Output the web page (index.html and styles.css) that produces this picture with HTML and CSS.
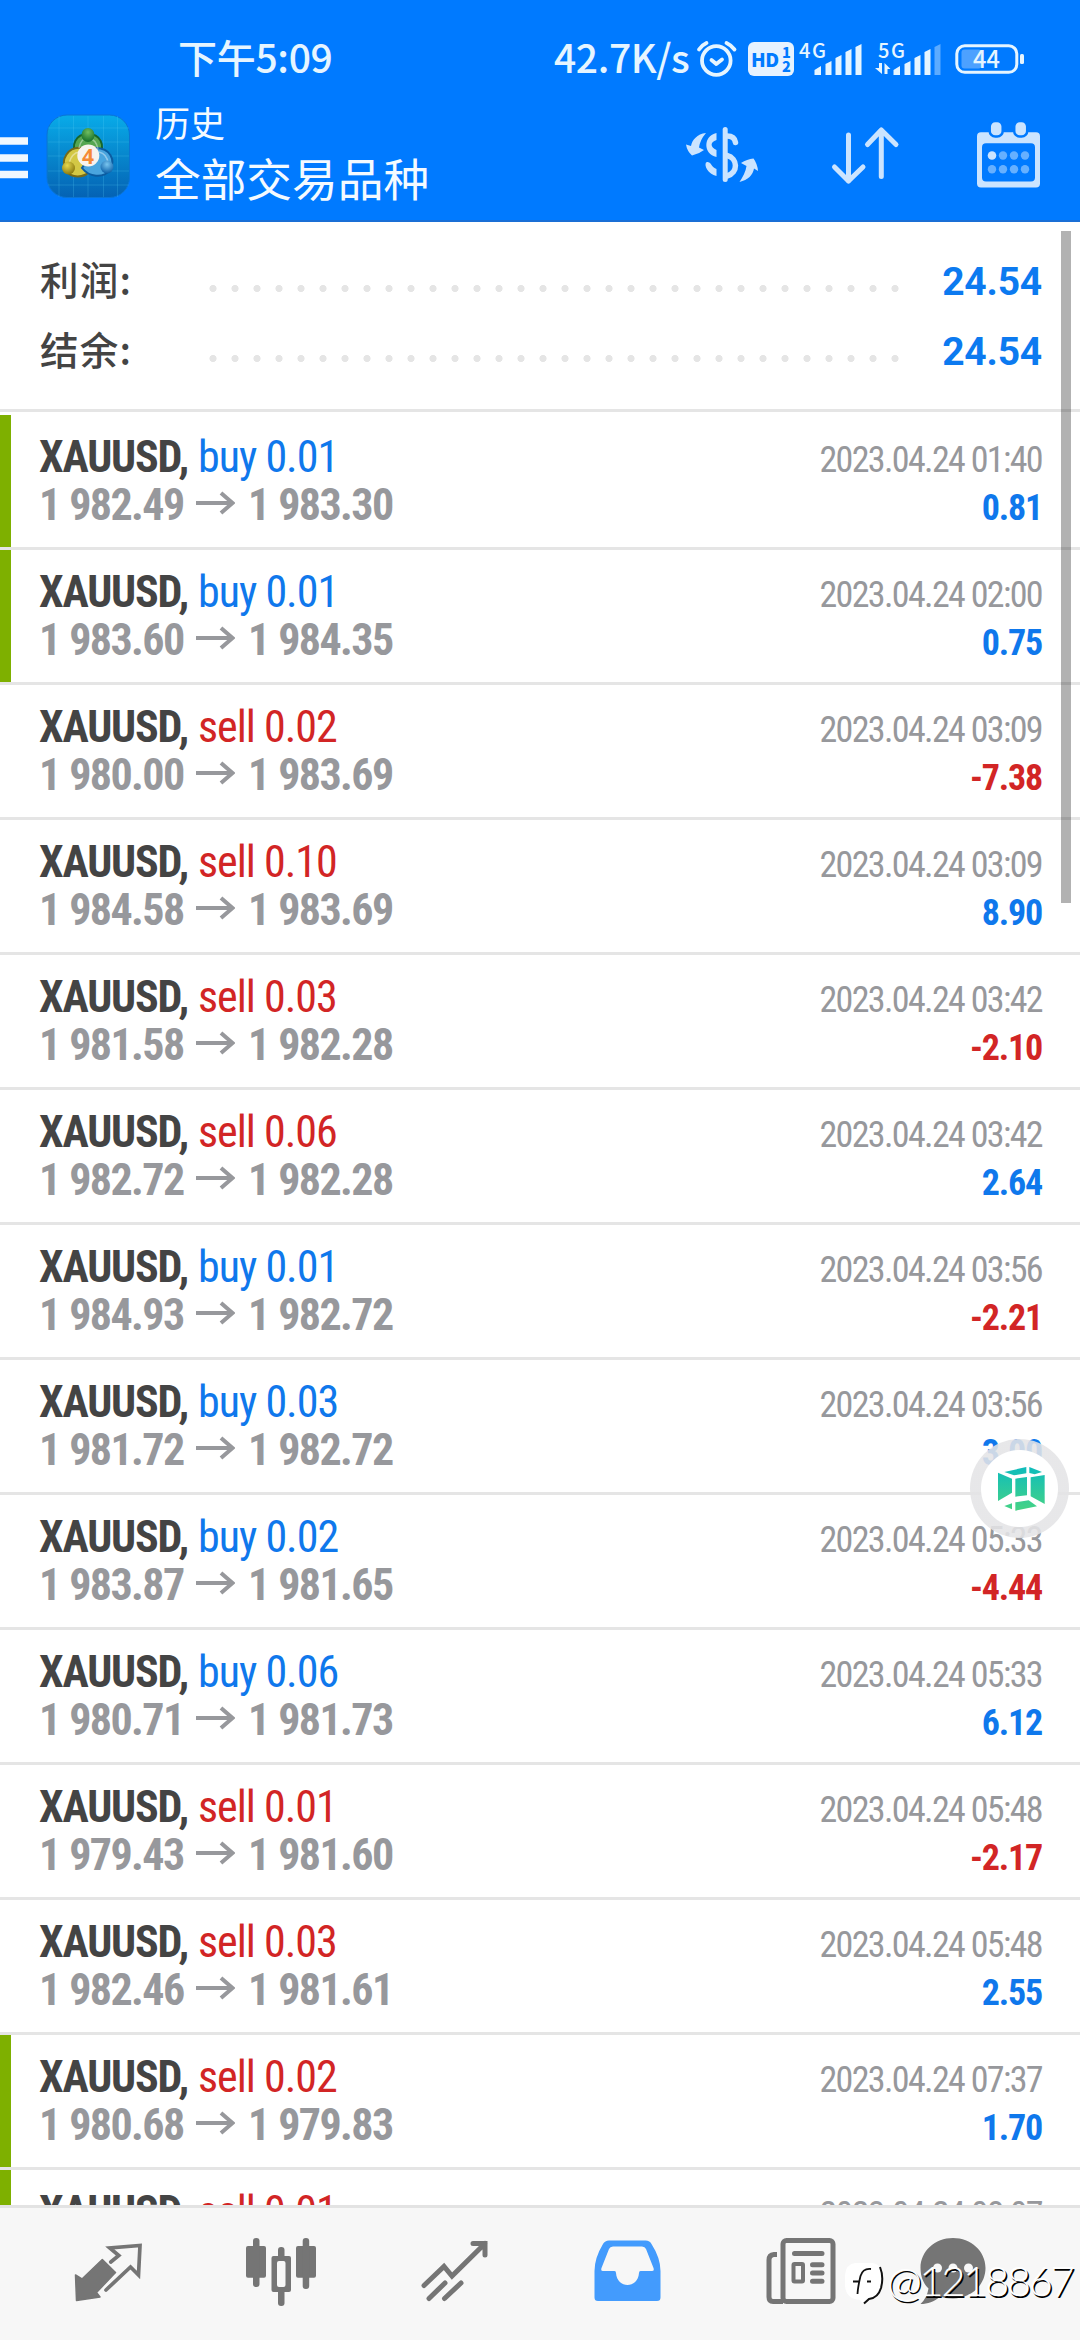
FILE: index.html
```
<!DOCTYPE html>
<html lang="zh-CN">
<head>
<meta charset="utf-8">
<title>历史</title>
<link rel="stylesheet" href="styles.css">
</head>
<body>
<svg width="0" height="0" class="defs"><defs>
<symbol id="arrow" viewBox="0 0 39 24"><path d="M0 12H36M25 2L36.500 12L25 22" fill="none" stroke="#97989c" stroke-width="4"/></symbol>
</defs></svg>
<header class="header">
  <div class="status">
    <span class="clock">下午5:09</span>
    <span class="speed">42.7K/s</span>
    <svg class="status-icons" viewBox="695 0 385 90">
      <g fill="none" stroke="#e6f5ff" stroke-width="3.800" stroke-linecap="round" stroke-linejoin="round">
        <circle cx="716.300" cy="60.500" r="14.300"/>
        <path d="M699 49.500Q702 45 706.500 43M726.500 43Q731 45 734.500 49.500M711.500 60L716.300 64L722 59.500"/>
      </g>
      <rect x="748" y="42" width="46" height="34" rx="6" fill="#e6f2ff"/>
      <g fill="#007aff" class="bold"><text x="751" y="66.500" font-size="19" textLength="28">HD</text><text x="782" y="57.500" font-size="14.500">1</text><text x="782" y="71.500" font-size="14.500">2</text></g>
      <g fill="#e6f5ff" class="medium"><text x="799" y="57.500" font-size="20" textLength="27">4G</text><text x="878" y="57.500" font-size="20" textLength="27">5G</text></g>
      <g fill="#e6f5ff">
        <path d="M814.500 70l6.500-4v9h-6.500zM825.500 64l6-3v14h-6zM835.500 58l6-3v20h-6zM845.500 52l6-3v26h-6zM855.500 47l6-3v31h-6z"/>
        <path d="M893.500 70l6.500-4v9h-6.500zM904.500 64l6-3v14h-6zM914.500 58l6-3v20h-6zM924.500 52l6-3v26h-6z"/>
        <path d="M934.500 47l6-3v31h-6z" opacity=".4"/>
        <path d="M879 63h3v11l-7-6h4zM884.500 74V63l6 6h-3v5z"/>
      </g>
      <rect x="961.500" y="49.500" width="20" height="19" rx="3" fill="#4da1ff"/>
      <rect x="956.800" y="45.800" width="60" height="26.500" rx="8" fill="none" stroke="#e6f5ff" stroke-width="3"/>
      <rect x="1020" y="54" width="4" height="10" rx="1.500" fill="#e6f5ff"/>
      <text x="986.500" y="67.700" font-size="23.500" text-anchor="middle" fill="#e6f5ff" class="medium">44</text>
    </svg>
  </div>
  <div class="toolbar">
    <svg class="menu" viewBox="0 0 46 132"><path d="M0 51h28M0 68h28M0 84.500h28" stroke="#f0f8ff" stroke-width="7.500"/></svg>
    <svg class="logo" viewBox="46 114 84 84">
      <defs>
        <linearGradient id="bg" x1="0" y1="0" x2="0" y2="1"><stop offset="0" stop-color="#08abe9"/><stop offset=".5" stop-color="#0786cc"/><stop offset="1" stop-color="#0462b4"/></linearGradient>
        <radialGradient id="gg" cx=".5" cy=".3" r=".7"><stop offset="0" stop-color="#70bd60"/><stop offset="1" stop-color="#146f28"/></radialGradient>
        <radialGradient id="yy" cx=".4" cy=".3" r=".7"><stop offset="0" stop-color="#e5d84e"/><stop offset="1" stop-color="#8a7a10"/></radialGradient>
        <radialGradient id="bb" cx=".5" cy=".3" r=".7"><stop offset="0" stop-color="#79c5ef"/><stop offset="1" stop-color="#0b5fa8"/></radialGradient>
      </defs>
      <rect x="47" y="115" width="82.500" height="82.500" rx="20" fill="url(#bg)" stroke="#0a74d4" stroke-width="1"/>
      <path d="M73.500 116v81M88 116v81M103.500 116v81M117.500 116v81M59 116v81M48 128h81M48 142h81M48 156h81M48 171h81M48 185h81" stroke="#5bd0f5" stroke-opacity=".22" stroke-width="1"/>
      <path d="M77 156C70 145 76 134 88 134C100 134 106 145 99 156z" fill="#55a651" stroke="#17662a" stroke-width="2"/>
      <path d="M82 148C68 146 60 160 66 170C71 179 84 178 90 171z" fill="#d3c845" stroke="#756a18" stroke-width="2"/>
      <path d="M96 148C110 148 116 160 110 170C103 179 89 177 82 168z" fill="#4aa5de" stroke="#0c5ca0" stroke-width="2"/>
      <path d="M79 148Q81 138 88 138Q96 139 98 149M69 163Q72 153 79 152M99 152Q107 154 108 163" fill="none" stroke="#fff" stroke-opacity=".4" stroke-width="1.500"/>
      <ellipse cx="88" cy="135" rx="6.500" ry="7" fill="url(#gg)"/><circle cx="68.500" cy="168" r="6.500" fill="url(#yy)"/><circle cx="107" cy="167" r="6.500" fill="url(#bb)"/>
      <circle cx="88.300" cy="155.500" r="11" fill="#f7f3ee"/>
      <text x="88" y="163.500" font-size="21" text-anchor="middle" fill="#f58a35" class="four">4</text>
    </svg>
    <div class="titles"><div class="sub">历史</div><div class="main">全部交易品种</div></div>
    <svg class="actions" viewBox="670 90 410 132">
      <g fill="none" stroke="#cbe4ff" stroke-width="5" stroke-linecap="round" stroke-linejoin="round">
        <path d="M725.200 129.500V179.500"/>
        <path d="M727 136C733 136 735 139 735.500 142.500M727 155.500C738 158 738.500 173 727 176" stroke-width="5.500"/>
        <path d="M848.500 135V181M834.500 167L848.500 181L863 167M881.300 176.500V130M867.500 144.500L881.300 130L896 144.500"/>
      </g>
      <g fill="#cbe4ff">
        <path d="M716.500 133C703 136 703 154 716.500 157V150C710 147 710 142 716.500 140z"/>
        <path d="M706 162.500C704 166 708 174 716.500 176V169C712 167 712 165 710 163C708 162 707 161.500 706 162.500z"/>
        <path d="M706 133C697 134 692 140 691 146L686 144.500Q687 151 692 155.500Q699 154 704 150L699 147.500Q700 140 706 133z"/>
        <path d="M739.500 182C748 180 753 175 754 168.500L758 171Q757.500 164 753.500 158.500Q747 159 741 163L746.500 166Q745.500 173 739.500 182z"/>
        <path fill-rule="evenodd" d="M981 132.300H1036Q1040 132.300 1040 136.300V183.500Q1040 187.500 1036 187.500H981Q977 187.500 977 183.500V136.300Q977 132.300 981 132.300zM986 143.300Q982 143.300 982 147.300V177.500Q982 181.500 986 181.500H1031Q1035 181.500 1035 177.500V147.300Q1035 143.300 1031 143.300z"/>
        <g stroke="#007aff" stroke-width="2.500"><rect x="989.700" y="121" width="13" height="15.500" rx="5.500"/><rect x="1014.200" y="121" width="13" height="15.500" rx="5.500"/></g>
        <circle cx="992" cy="155.500" r="4.300"/>
      </g>
      <g fill="#66b0ff"><circle cx="1003" cy="155.500" r="4.200"/><circle cx="1014" cy="155.500" r="4.200"/><circle cx="1025" cy="155.500" r="4.200"/><circle cx="992" cy="169.300" r="4.200"/><circle cx="1003" cy="169.300" r="4.200"/><circle cx="1014" cy="169.300" r="4.200"/><circle cx="1025" cy="169.300" r="4.200"/></g>
    </svg>
  </div>
</header>
<main class="history">
  <section class="summary">
    <div class="total"><span class="name">利润:</span><i class="dots"></i><b>24.54</b></div>
    <div class="total"><span class="name">结余:</span><i class="dots"></i><b>24.54</b></div>
  </section>
  <section class="deals">
    <article class="deal tp"><div><p class="head"><b>XAUUSD,</b><span class="buy">buy 0.01</span></p><p class="price"><span>1 982.49</span><svg><use href="#arrow"/></svg><span>1 983.30</span></p></div><div class="side"><time>2023.04.24 01:40</time><b class="buy">0.81</b></div></article>
    <article class="deal tp"><div><p class="head"><b>XAUUSD,</b><span class="buy">buy 0.01</span></p><p class="price"><span>1 983.60</span><svg><use href="#arrow"/></svg><span>1 984.35</span></p></div><div class="side"><time>2023.04.24 02:00</time><b class="buy">0.75</b></div></article>
    <article class="deal"><div><p class="head"><b>XAUUSD,</b><span class="sell">sell 0.02</span></p><p class="price"><span>1 980.00</span><svg><use href="#arrow"/></svg><span>1 983.69</span></p></div><div class="side"><time>2023.04.24 03:09</time><b class="sell">-7.38</b></div></article>
    <article class="deal"><div><p class="head"><b>XAUUSD,</b><span class="sell">sell 0.10</span></p><p class="price"><span>1 984.58</span><svg><use href="#arrow"/></svg><span>1 983.69</span></p></div><div class="side"><time>2023.04.24 03:09</time><b class="buy">8.90</b></div></article>
    <article class="deal"><div><p class="head"><b>XAUUSD,</b><span class="sell">sell 0.03</span></p><p class="price"><span>1 981.58</span><svg><use href="#arrow"/></svg><span>1 982.28</span></p></div><div class="side"><time>2023.04.24 03:42</time><b class="sell">-2.10</b></div></article>
    <article class="deal"><div><p class="head"><b>XAUUSD,</b><span class="sell">sell 0.06</span></p><p class="price"><span>1 982.72</span><svg><use href="#arrow"/></svg><span>1 982.28</span></p></div><div class="side"><time>2023.04.24 03:42</time><b class="buy">2.64</b></div></article>
    <article class="deal"><div><p class="head"><b>XAUUSD,</b><span class="buy">buy 0.01</span></p><p class="price"><span>1 984.93</span><svg><use href="#arrow"/></svg><span>1 982.72</span></p></div><div class="side"><time>2023.04.24 03:56</time><b class="sell">-2.21</b></div></article>
    <article class="deal"><div><p class="head"><b>XAUUSD,</b><span class="buy">buy 0.03</span></p><p class="price"><span>1 981.72</span><svg><use href="#arrow"/></svg><span>1 982.72</span></p></div><div class="side"><time>2023.04.24 03:56</time><b class="buy">3.00</b></div></article>
    <article class="deal"><div><p class="head"><b>XAUUSD,</b><span class="buy">buy 0.02</span></p><p class="price"><span>1 983.87</span><svg><use href="#arrow"/></svg><span>1 981.65</span></p></div><div class="side"><time>2023.04.24 05:33</time><b class="sell">-4.44</b></div></article>
    <article class="deal"><div><p class="head"><b>XAUUSD,</b><span class="buy">buy 0.06</span></p><p class="price"><span>1 980.71</span><svg><use href="#arrow"/></svg><span>1 981.73</span></p></div><div class="side"><time>2023.04.24 05:33</time><b class="buy">6.12</b></div></article>
    <article class="deal"><div><p class="head"><b>XAUUSD,</b><span class="sell">sell 0.01</span></p><p class="price"><span>1 979.43</span><svg><use href="#arrow"/></svg><span>1 981.60</span></p></div><div class="side"><time>2023.04.24 05:48</time><b class="sell">-2.17</b></div></article>
    <article class="deal"><div><p class="head"><b>XAUUSD,</b><span class="sell">sell 0.03</span></p><p class="price"><span>1 982.46</span><svg><use href="#arrow"/></svg><span>1 981.61</span></p></div><div class="side"><time>2023.04.24 05:48</time><b class="buy">2.55</b></div></article>
    <article class="deal tp"><div><p class="head"><b>XAUUSD,</b><span class="sell">sell 0.02</span></p><p class="price"><span>1 980.68</span><svg><use href="#arrow"/></svg><span>1 979.83</span></p></div><div class="side"><time>2023.04.24 07:37</time><b class="buy">1.70</b></div></article>
    <article class="deal tp"><div><p class="head"><b>XAUUSD,</b><span class="sell">sell 0.01</span></p></div><div class="side"><time>2023.04.24 08:07</time></div></article>
  </section>
  <div class="scrollbar"></div>
</main>
<nav class="tabs">
  <svg viewBox="22 2208 173 132">
    <path d="M75.500 2275L82 2279L102.300 2259.500L115.500 2272.500L96.500 2292.500L100 2297L76.500 2300.500Z" fill="#757575" stroke="#757575" stroke-width="1.500" stroke-linejoin="round"/>
    <path d="M110.800 2262L118.800 2255.500L109.800 2248L140 2245.500L138.500 2275L130.500 2267L106 2290" fill="none" stroke="#757575" stroke-width="3.700" stroke-linecap="round"/>
  </svg>
  <svg viewBox="195 2208 173 132"><g fill="#757575"><rect x="246" y="2246" width="20" height="31.700" rx="2"/><rect x="253" y="2238" width="6.500" height="49" rx="3"/><rect x="296" y="2246" width="20" height="31.700" rx="2"/><rect x="302.700" y="2238" width="6.500" height="51" rx="3"/><rect x="271.500" y="2256" width="19.500" height="36" rx="2"/><rect x="278" y="2247" width="6.500" height="59" rx="3"/></g><rect x="277" y="2261" width="8.500" height="26" rx="2" fill="#f7f7f7"/></svg>
  <svg viewBox="368 2208 173 132"><path d="M424 2285.500L444 2266.500L452 2276L485 2243.500M473 2243.500H485V2255M429 2298.500L445 2283M444.500 2298.500L461 2283" fill="none" stroke="#757575" stroke-width="5" stroke-linecap="round"/></svg>
  <svg viewBox="541 2208 173 132"><path fill-rule="evenodd" fill="#439bfd" d="M609 2240.500H645.500Q650 2240.500 651.500 2244Q660.500 2258 660.500 2271V2297.500Q660.500 2301 657 2301H598Q594.500 2301 594.500 2297.500V2271Q594.500 2258 603 2244Q605 2240.500 609 2240.500zM613 2246.500Q610 2246.500 609 2249L601.500 2268Q600.500 2271 603 2271H614.500Q616 2271 616 2273C617 2289 638 2289 639 2273Q639 2271 640.500 2271H652Q654.500 2271 653.500 2268L646 2249Q645 2246.500 642 2246.500z"/></svg>
  <svg viewBox="714 2208 173 132"><g fill="none" stroke="#757575" stroke-width="5" stroke-linecap="round"><rect x="783" y="2240.500" width="50" height="61" rx="3.500"/><path d="M777 2254.500H774Q769 2255 769 2260V2297Q769 2301.500 773 2301.500H783" stroke-linecap="butt"/><path d="M794.500 2253.500H822M812.500 2264.700H822M812.500 2273H822M812.500 2281.200H822"/><rect x="793.500" y="2264" width="9.500" height="17.500" rx="1" stroke-width="4"/></g></svg>
  <svg class="chat" viewBox="887 2208 173 132"><path d="M953 2238C971 2238 985.500 2251 985.500 2268C985.500 2285 971 2298.500 953 2298.500C947 2298.500 943 2297.500 940 2296.500C934 2302 928 2304 920.500 2304Q927 2298 928.500 2288.500C923 2283 920.500 2276 920.500 2268C920.500 2251 935 2238 953 2238z" fill="#757575"/><g fill="#f7f7f7"><circle cx="937.500" cy="2268" r="4.500"/><circle cx="953" cy="2268" r="4.500"/><circle cx="968.500" cy="2268" r="4.500"/></g></svg>
</nav>
<div class="watermark">
  <svg viewBox="842 2258 44 50"><path d="M855 2263H872Q883 2264 882.500 2280Q882 2298 868 2299L863 2304L860 2300Q846 2299 845 2286V2275Q846 2264 855 2263z" fill="#fff"/><path d="M880 2267Q884 2277 881 2288Q878 2298 869 2299L864 2303.500" fill="none" stroke="#111" stroke-width="2"/><path d="M871 2269Q863 2268 860.500 2276Q858 2286 857.500 2294M853 2281.500H860M867 2281.500H871" fill="none" stroke="#111" stroke-width="1.800"/></svg>
  <span>@1218867</span>
</div>
<div class="bubble">
  <svg viewBox="0 0 180 180">
    <defs><linearGradient id="cube" gradientUnits="userSpaceOnUse" x1="0" y1="36" x2="0" y2="166"><stop offset="0" stop-color="#0fbcbc"/><stop offset="1" stop-color="#45d385"/></linearGradient></defs>
    <g fill="url(#cube)"><path d="M37 51L103 36V55L66 61z"/><path d="M112 36L150 51L128 58L112 54z"/><path d="M18 53L60 71V113L18 138z"/><path d="M70 71L105 66V121L70 125z"/><path d="M116 67L158 60V147L116 124z"/><path d="M37 153L60 145V163z"/><path d="M70 142L110 136L135 154L70 167z"/></g>
  </svg>
</div>
</body>
</html>
```
FILE: styles.css
```
* { box-sizing: border-box; }
body {
  position: relative;
  display: flex;
  flex-direction: column;
  width: 1080px;
  height: 2340px;
  margin: 0;
  overflow: hidden;
  background: #fff;
  font-family: Roboto, "Noto Sans CJK SC", sans-serif;
}
svg { display: block; }
p { margin: 0; }
.defs { position: absolute; }

.header {
  flex: none;
  height: 222px;
  background: #007aff;
  border-bottom: 2px solid #1a6fd6;
  color: #f4faff;
}
.status {
  display: flex;
  height: 90px;
  padding-left: 178px;
  color: #e6f5ff;
  font: 500 39px/68px "Noto Sans CJK SC", sans-serif;
  white-space: nowrap;
}
.clock { width: 376px; padding-top: 21.500px; letter-spacing: -0.300px; }
.speed { width: 141px; padding-top: 21.500px; letter-spacing: -0.400px; }
.status-icons { width: 385px; height: 90px; font-family: "Noto Sans CJK SC", sans-serif; }
.bold { font-weight: 900; }
.medium { font-weight: 500; }
.four { font-family: "Open Sans", sans-serif; font-weight: 700; }
.toolbar { display: flex; height: 132px; }
.menu { width: 46px; height: 132px; }
.logo { width: 84px; height: 84px; margin-top: 24px; }
.titles { width: 540px; padding: 7px 0 0 25px; font-family: "Noto Sans CJK SC", sans-serif; font-weight: 400; }
.sub { font-size: 35px; line-height: 50px; }
.main { font-size: 45.700px; line-height: 61px; }
.actions { width: 410px; height: 132px; }

.history { position: relative; flex: 1; min-height: 0; overflow: hidden; }
.summary { height: 190px; padding: 21px 38px 0 40px; border-bottom: 3px solid #e5e5e5; }
.total { display: flex; height: 70px; }
.total .name { width: 162px; color: #444; font: 500 38.500px/70px "Noto Sans CJK SC", sans-serif; letter-spacing: 1.200px; }
.dots {
  width: 704px;
  height: 7px;
  margin-top: 42px;
  background: radial-gradient(circle at 11px 3.500px, #e5e5e5 3.200px, transparent 3.900px) 0 0 / 22px 7px;
}
.total b { flex: 1; padding-top: 4px; color: #0c7af0; font-size: 39px; line-height: 70px; text-align: right; letter-spacing: -0.200px; }

.deals { padding-top: 3px; font-family: "Roboto Condensed", Roboto, sans-serif; }
.deal {
  display: flex;
  justify-content: space-between;
  height: 135px;
  padding: 18px 38px 0 39px;
  border-bottom: 3px solid #e5e5e5;
}
.tp { background: linear-gradient(#7eb000, #7eb000) 0 0 / 11px 132px no-repeat; }
.head, .price { display: flex; height: 48px; font-size: 44px; line-height: 48px; white-space: nowrap; }
.head { letter-spacing: -1px; }
.head b { width: 159px; color: #444; letter-spacing: -1.200px; }
.price { color: #97989c; font-weight: 700; letter-spacing: -1.600px; word-spacing: 1px; }
.price span { width: 157px; }
.price svg { width: 39px; height: 24px; margin: 10px 13px 0 0; }
.side { display: flex; flex-direction: column; align-items: flex-end; padding-top: 3px; font-size: 36px; line-height: 48px; white-space: nowrap; }
.side time { color: #97989c; letter-spacing: -1.650px; }
.side b { letter-spacing: -1.200px; }
.buy { color: #0f78ec; }
.sell { color: #d22525; }
.scrollbar { position: absolute; top: 9px; right: 9px; width: 10px; height: 672px; background: rgba(0, 0, 0, .3); }

.tabs {
  display: flex;
  flex: none;
  height: 135px;
  padding: 0 20px 0 22px;
  border-top: 3px solid #e3e3e3;
  background: #f7f7f7;
}
.tabs svg { width: 173px; height: 132px; }

.watermark { position: absolute; left: 842px; top: 2258px; display: flex; color: #fff; }
.watermark svg { width: 44px; height: 50px; }
.watermark span { padding-left: 1px; font: 300 42px/44px Lato, sans-serif; letter-spacing: -2.500px; text-shadow: 1.500px 1.500px 0 #000; }
.bubble {
  position: absolute;
  left: 970px;
  top: 1439px;
  width: 99px;
  height: 99px;
  padding: 15.500px 0 0 21.500px;
  border-radius: 50%;
  background: radial-gradient(circle, #fff 38px, rgba(228, 228, 230, .88) 39px);
}
.bubble svg { width: 60px; height: 60px; }
```
